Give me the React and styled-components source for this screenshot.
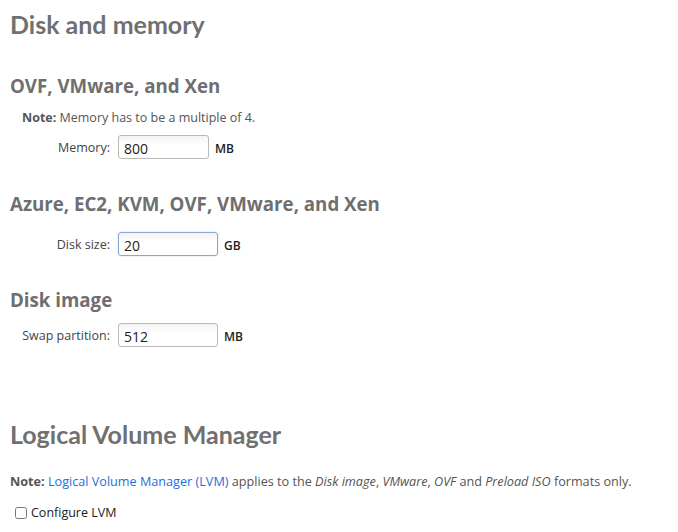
import React from 'react'
import styled, { createGlobalStyle } from 'styled-components'

const GlobalStyle = createGlobalStyle`
  body {
    margin: 0;
    background: #fff;
    font-family: "Open Sans", "DejaVu Sans", sans-serif;
    color: #555;
  }
`

export default function App() {
  return (
    <Page>
      <GlobalStyle />
      <Title>Disk and memory</Title>

      <Section>
        <SubTitle>OVF, VMware, and Xen</SubTitle>
        <Note $indent>
          <b>Note:</b> Memory has to be a multiple of 4.
        </Note>
        <Field label="Memory:" value="800" unit="MB" width={91} gap={7} />
      </Section>

      <Section $gap={33}>
        <SubTitle>Azure, EC2, KVM, OVF, VMware, and Xen</SubTitle>
        <Field label="Disk size:" value="20" unit="GB" width={100} gap={16} focused />
      </Section>

      <Section $gap={32}>
        <SubTitle>Disk image</SubTitle>
        <Field label="Swap partition:" value="512" unit="MB" width={100} gap={11} />
      </Section>

      <Title $big>Logical Volume Manager</Title>
      <Note>
        <b>Note:</b> <Link href="#">Logical Volume Manager (LVM)</Link> applies to the{' '}
        <i>Disk image</i>, <i>VMware</i>, <i>OVF</i> and <i>Preload ISO</i> formats only.
      </Note>
      <CheckRow>
        <Box type="checkbox" />
        Configure LVM
      </CheckRow>
    </Page>
  )
}

const Field = ({ label, value, unit, width, gap, focused }) => (
  <Row $gap={gap}>
    <Label>{label}</Label>
    <Input defaultValue={value} style={{ width }} $focused={focused} />
    <Unit>{unit}</Unit>
  </Row>
)

/**
 * UI
 */
const Page = styled.div`
  padding: 0 10px;
`

const Title = styled.h1`
  margin: ${p => (p.$big ? '63px 0 0' : '0')};
  padding-top: 8px;
  font-family: Lato, "Open Sans", sans-serif;
  font-size: 25px;
  line-height: 32px;
  font-weight: 700;
  color: #707070;
`

const Section = styled.section`
  margin-top: ${p => p.$gap || 34}px;
`

const SubTitle = styled.h3`
  margin: 0;
  font-size: 18.7px;
  line-height: 24px;
  font-weight: 700;
  color: #6f6f6f;
`

const Note = styled.p`
  margin: ${p => (p.$indent ? '10px 0 0 12px' : '21px 0 0')};
  font-size: ${p => (p.$indent ? '12.5px' : '12.65px')};
  line-height: 20px;
  color: #555;

  b {
    font-weight: 700;
    color: #555;
  }

  i {
    font-style: italic;
  }
`

const Link = styled.a`
  color: #1e6fd9;
  text-decoration: none;
`

const Row = styled.div`
  display: flex;
  align-items: center;
  margin-top: ${p => p.$gap}px;
`

const Label = styled.label`
  width: 108px;
  padding-right: 8px;
  box-sizing: border-box;
  text-align: right;
  font-size: 12.5px;
  color: #444;
`

const Input = styled.input`
  box-sizing: border-box;
  height: 24px;
  padding: 2px 5px 0;
  border: 1px solid ${p => (p.$focused ? '#8aa9d0' : '#b9b9b9')};
  border-radius: 3px;
  background: linear-gradient(#f3f3f3, #fff 40%);
  font-family: "Open Sans", sans-serif;
  font-size: 14px;
  color: #222;
  outline: none;
  box-shadow: ${p => (p.$focused ? '0 0 2px rgba(80, 140, 220, 0.35)' : 'none')};
`

const Unit = styled.span`
  margin-left: 6px;
  padding-top: 3px;
  font-size: 12px;
  font-weight: 600;
  color: #222;
`

const CheckRow = styled.label`
  display: flex;
  align-items: center;
  margin-top: 13px;
  font-size: 12.5px;
  color: #222;
`

const Box = styled.input`
  width: 12px;
  height: 12px;
  margin: 1px 4px 0 5px;
`
